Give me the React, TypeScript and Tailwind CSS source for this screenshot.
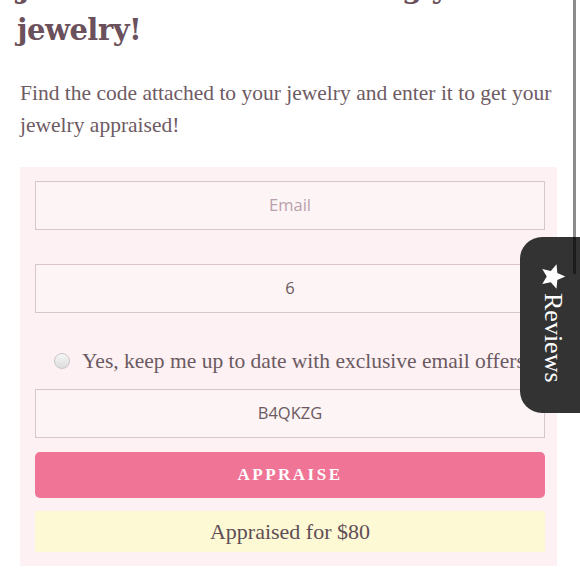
import React from "react";

const serif = { fontFamily: '"Liberation Serif", "DejaVu Serif", serif' };
const sans = { fontFamily: '"Open Sans", "Noto Sans", sans-serif' };

function Input({ value, placeholder }: { value?: string; placeholder?: string }) {
  return (
    <div
      className="w-[510px] h-[49px] border border-[#d9c5cd] bg-[#fdf4f6] flex items-center justify-center text-[16.5px]"
      style={sans}
    >
      {value ? (
        <span className="text-[#6a5a60]">{value}</span>
      ) : (
        <span className="text-[#b9a0ac]">{placeholder}</span>
      )}
    </div>
  );
}

export default function App() {
  return (
    <div className="relative w-[580px] h-[580px] overflow-hidden bg-white">
      <div className="px-[20px]">
        <h1
          className="mt-[-33px] ml-[-3px] text-[29px] leading-[42px] font-bold text-[#6b515b] whitespace-nowrap"
          style={{ fontFamily: '"DejaVu Serif", "Liberation Serif", serif', letterSpacing: "-0.5px" }}
        >
          Join us and start tracking your
          <br />
          jewelry!
        </h1>
        <p className="mt-[26px] text-[21.5px] leading-[32px] text-[#6e5b63] whitespace-nowrap" style={serif}>
          Find the code attached to your jewelry and enter it to get your
          <br />
          jewelry appraised!
        </p>
        <div className="mt-[26px] w-[537px] bg-[#fdf1f4] pt-[14px] pb-[14px] pl-[15px] flex flex-col">
          <Input placeholder="Email" />
          <div className="h-[34px]" />
          <Input value="6" />
          <div className="h-[76px] flex items-start pt-[35px] pl-[19px] gap-[12px]">
            <span className="mt-[5px] w-[16px] h-[16px] rounded-full border border-[#c9c6c8] bg-gradient-to-b from-[#f7f7f7] to-[#dcdcdc] shrink-0" />
            <span className="text-[21.5px] leading-[26px] text-[#6b5a61] whitespace-nowrap" style={serif}>
              Yes, keep me up to date with exclusive email offers
            </span>
          </div>
          <Input value="B4QKZG" />
          <div className="h-[14px]" />
          <button
            className="w-[510px] h-[46px] rounded-[5px] bg-[#f07496] text-white font-bold text-[17px] tracking-[2.5px]"
            style={serif}
          >
            APPRAISE
          </button>
          <div className="h-[13px]" />
          <div
            className="w-[510px] h-[41px] bg-[#fef9d5] flex items-center justify-center text-[22px] text-[#5f4e55]"
            style={serif}
          >
            Appraised for $80
          </div>
        </div>
      </div>

      {/* Reviews tab */}
      <div className="absolute right-0 top-[237px] w-[60px] h-[176px] bg-[#333333] rounded-l-[22px] flex flex-col items-center pt-[26px] gap-[3px]">
        <svg width="27" height="27" viewBox="0 0 24 24" className="rotate-90 ml-[6px]">
          <path
            d="M12 1.5l3.1 7.1 7.7.7-5.8 5.1 1.7 7.6L12 18l-6.7 4 1.7-7.6L1.2 9.3l7.7-.7z"
            fill="#ffffff"
          />
        </svg>
        <span
          className="text-white text-[26px] leading-none ml-[6px] [writing-mode:vertical-rl]"
          style={serif}
        >
          Reviews
        </span>
      </div>

      {/* scrollbar */}
      <div className="absolute top-0 right-[4px] w-[3px] h-[274px] bg-black/45" />
    </div>
  );
}
